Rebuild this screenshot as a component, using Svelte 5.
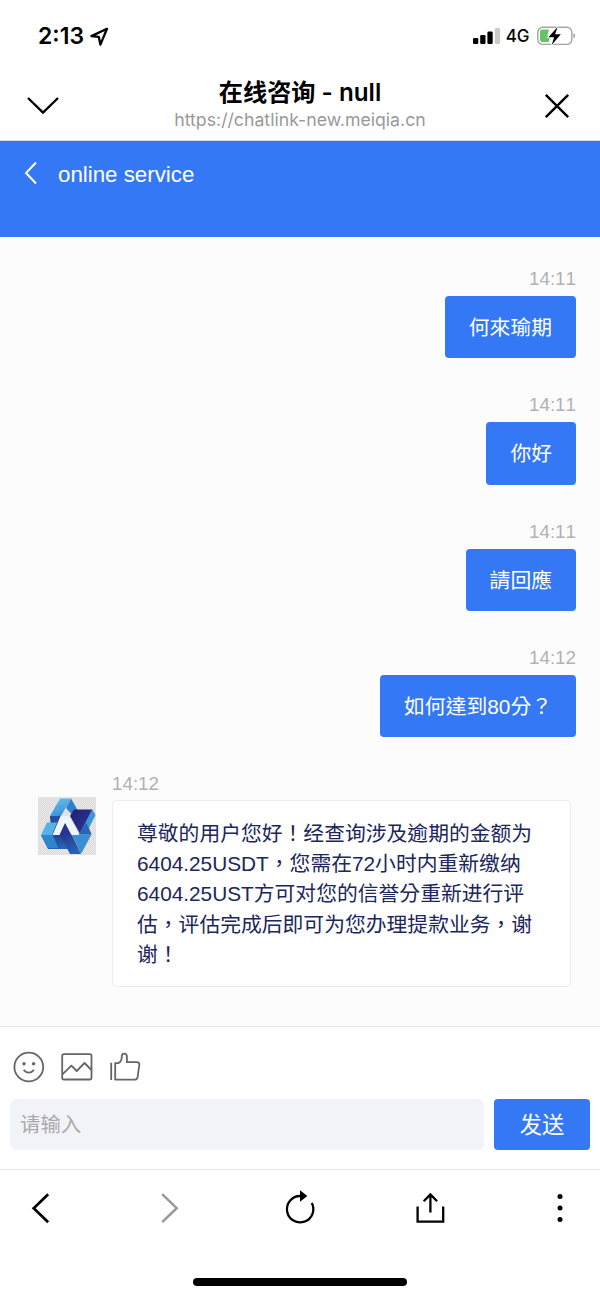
<script lang="ts">
    const messages = [
        { time: '14:11', text: '何來瑜期' },
        { time: '14:11', text: '你好' },
        { time: '14:11', text: '請回應' },
        { time: '14:12', text: '如何達到80分？' }
    ];

    const replyLines = [
        '尊敬的用户您好！经查询涉及逾期的金额为',
        '6404.25USDT，您需在72小时内重新缴纳',
        '6404.25UST方可对您的信誉分重新进行评',
        '估，评估完成后即可为您办理提款业务，谢',
        '谢！'
    ];

    let draft = '';
</script>

<div class="screen">
    <div class="status-bar">
        <div class="clock">
            <span>2:13</span>
            <svg width="20" height="20" viewBox="0 0 20 20">
                <path d="M18 2.8 2.4 10.1 9.8 10.9 11.4 18.6Z" fill="none" stroke="#000" stroke-width="2.3" stroke-linejoin="round" />
            </svg>
        </div>
        <div class="indicators">
            <svg width="28" height="18" viewBox="0 0 28 18">
                <rect x="0" y="11" width="5.3" height="6" rx="1.3" />
                <rect x="7.2" y="8" width="5.3" height="9" rx="1.3" />
                <rect x="14.4" y="4.4" width="5.3" height="12.6" rx="1.3" />
                <rect x="21.8" y="1" width="5.3" height="16" rx="1.3" fill="#ccc" />
            </svg>
            <span class="network">4G</span>
            <svg class="battery" width="40" height="20" viewBox="0 0 40 20">
                <rect x="0.8" y="1.2" width="34" height="17.2" rx="5" fill="none" stroke="#a5a5a5" stroke-width="1.4" />
                <path d="M36.4 7v5.6q1.8-.7 1.8-2.8t-1.8-2.8z" fill="#a5a5a5" />
                <path d="M5.2 3.6H12L10.4 10H13l-1.3 6H5.2q-2.2 0-2.2-2.2v-8q0-2.2 2.2-2.2z" fill="#65c466" />
                <path d="M20.7.7 11.4 11.2h5.7L14.7 19l9.1-10.8h-5.7z" stroke="#fff" stroke-width="1.6" paint-order="stroke" />
            </svg>
        </div>
    </div>

    <header class="browser-bar">
        <button aria-label="Minimize">
            <svg width="34" height="20" viewBox="0 0 34 20">
                <path d="M2 2 17 16.5 32 2" fill="none" stroke="#000" stroke-width="2.4" />
            </svg>
        </button>
        <div class="page-info">
            <h1>在线咨询 - null</h1>
            <p>https://chatlink-new.meiqia.cn</p>
        </div>
        <button aria-label="Close">
            <svg width="26" height="26" viewBox="0 0 26 26">
                <path d="M1.8 1.8 24.2 24.2M24.2 1.8 1.8 24.2" fill="none" stroke="#000" stroke-width="2.4" />
            </svg>
        </button>
    </header>

    <div class="service-bar">
        <svg width="14" height="24" viewBox="0 0 14 24">
            <path d="M12 1.5 2 12 12 22.5" fill="none" stroke="#fff" stroke-width="2" />
        </svg>
        <span>online service</span>
    </div>

    <main class="chat">
        {#each messages as message}
            <div class="message own">
                <time>{message.time}</time>
                <div class="bubble">{message.text}</div>
            </div>
        {/each}

        <div class="message agent">
            <svg class="avatar" width="58" height="58" viewBox="0 0 58 58">
                <defs>
                    <pattern id="checker" width="2" height="2" patternUnits="userSpaceOnUse">
                        <rect width="2" height="2" fill="#eaeaea" />
                        <rect width="1" height="1" fill="#dadada" />
                        <rect x="1" y="1" width="1" height="1" fill="#dadada" />
                    </pattern>
                    <linearGradient id="sky" x2="0.4" y2="1">
                        <stop offset="0" stop-color="#6cc3f0" />
                        <stop offset="1" stop-color="#3a93d8" />
                    </linearGradient>
                    <linearGradient id="navy" x2="1" y2="1">
                        <stop offset="0" stop-color="#201f74" />
                        <stop offset="1" stop-color="#2c3c9c" />
                    </linearGradient>
                    <linearGradient id="royal" x2="0.6" y2="1">
                        <stop offset="0" stop-color="#20388e" />
                        <stop offset="1" stop-color="#2b62b4" />
                    </linearGradient>
                </defs>
                <rect width="58" height="58" fill="url(#checker)" />
                <path d="M12 19H24L41 38H14z" fill="url(#navy)" />
                <path d="M12 19H22L16 34z" fill="#2450a4" />
                <path d="M22 1.5H33L23 19H12z" fill="url(#sky)" />
                <path d="M33 1.5 39.5 13 35 19 28 11z" fill="#2f7fca" />
                <path d="M36 12.5H54.5L42 37 32 19z" fill="url(#navy)" />
                <path d="M54.5 12.5 57.5 18 51 31 53.5 37.5H41z" fill="#3c97d8" />
                <path d="M48 25.5 53.5 37.5H41z" fill="#2a62b4" />
                <path d="M9 25.5H19L14 38H3z" fill="#56b2e6" />
                <path d="M3 38H26L31 52H10z" fill="url(#royal)" />
                <path d="M3 38H15L20 51H10z" fill="#3086cd" />
                <path d="M22 38H34L43 57H32z" fill="url(#royal)" />
                <path d="M34 37.5H53.5L43 57z" fill="#3b8ed4" />
                <path d="M22.5 19H31.5L41 38H33.5L27 26 21.5 38H14.5z" fill="#eef5fc" />
            </svg>
            <div class="reply">
                <time>14:12</time>
                <div class="bubble">
                    {#each replyLines as line}
                        <div>{line}</div>
                    {/each}
                </div>
            </div>
        </div>
    </main>

    <section class="composer">
        <div class="tools">
            <button aria-label="Emoji">
                <svg width="32" height="32" viewBox="0 0 32 32">
                    <circle cx="15.8" cy="16" r="14.4" />
                    <circle class="eye" cx="11" cy="12.7" r="1.7" />
                    <circle class="eye" cx="20.6" cy="12.7" r="1.7" />
                    <path d="M10.6 18.8Q15.8 24.6 21 18.8" />
                </svg>
            </button>
            <button aria-label="Image">
                <svg width="32" height="32" viewBox="0 0 32 32">
                    <rect x="1.2" y="3.2" width="29.3" height="25.3" rx="1.8" />
                    <path d="M1.4 23.3 10.4 14.7 15.7 20 23.5 12 30.5 19" />
                </svg>
            </button>
            <button aria-label="Like">
                <svg width="32" height="32" viewBox="0 0 32 32">
                    <path d="M2.2 11.8V29M6.2 28.6V12.2H9.2Q12.8 10.8 12.8 5.5 12.8 2.7 15.2 2.7 17.9 2.7 17.9 5.8V11.2H28Q30.6 11.2 30.3 14L28.6 26.2Q28.1 28.6 25.7 28.6Z" />
                </svg>
            </button>
        </div>
        <div class="input-row">
            <input type="text" placeholder="请输入" bind:value={draft} />
            <button class="send-btn">发送</button>
        </div>
    </section>

    <nav class="toolbar">
        <button aria-label="Back">
            <svg width="32" height="32" viewBox="0 0 32 32">
                <path d="M24.2 2.2 9.7 16.2 24.2 30.2" fill="none" stroke="#000" stroke-width="2.7" />
            </svg>
        </button>
        <button aria-label="Forward">
            <svg width="32" height="32" viewBox="0 0 32 32">
                <path d="M8.2 2.2 22.7 16.2 8.2 30.2" fill="none" stroke="#999" stroke-width="2.5" />
            </svg>
        </button>
        <button aria-label="Reload">
            <svg width="32" height="36" viewBox="0 0 32 36">
                <path d="M18 6H16A13.2 13.2 0 1 0 27.8 13" fill="none" stroke="#000" stroke-width="2.3" />
                <path d="M16 0.3 23.4 6 16 11.7z" />
            </svg>
        </button>
        <button aria-label="Share">
            <svg width="32" height="32" viewBox="0 0 32 32">
                <path d="M3.6 14.5V29.6H29.2V14.5M16.4 20.5V2.5M9.7 9.2 16.4 2.5 23.1 9.2" fill="none" stroke="#000" stroke-width="2.3" />
            </svg>
        </button>
        <button aria-label="More">
            <svg width="32" height="32" viewBox="0 0 32 32">
                <circle cx="16" cy="4.5" r="2.5" />
                <circle cx="16" cy="16" r="2.5" />
                <circle cx="16" cy="27.5" r="2.5" />
            </svg>
        </button>
    </nav>

    <div class="home-indicator"></div>
</div>

<style>
    :global(body) {
        margin: 0;
        background: #fff;
    }

    .screen {
        display: flex;
        flex-direction: column;
        width: 600px;
        height: 1299px;
        overflow: hidden;
        background: #fff;
        color: #000;
        font-family: "Liberation Sans", "Noto Sans CJK TC", sans-serif;
    }

    button {
        display: flex;
        align-items: center;
        justify-content: center;
        padding: 0;
        border: none;
        background: none;
    }

    svg {
        display: block;
        flex-shrink: 0;
    }

    .status-bar {
        display: flex;
        justify-content: space-between;
        align-items: center;
        box-sizing: border-box;
        height: 72px;
        padding: 0 23.5px 0 38px;
        font-family: Inter, sans-serif;
    }

    .clock {
        display: flex;
        align-items: center;
        gap: 4.5px;
        font-size: 23px;
        font-weight: 600;
    }

    .indicators {
        display: flex;
        align-items: center;
    }

    .network {
        margin-left: 5px;
        font-size: 17px;
        font-weight: 500;
    }

    .battery {
        margin-left: 7px;
    }

    .browser-bar {
        display: flex;
        justify-content: space-between;
        box-sizing: border-box;
        height: 69px;
        padding: 0 30px 0 26px;
        border-bottom: 1px solid #d5d9e0;
    }

    .browser-bar button {
        width: 34px;
        height: 67px;
    }

    .browser-bar button:last-child {
        width: 26px;
    }

    .page-info {
        margin-right: 4px;
        text-align: center;
        font-family: Inter, "Noto Sans CJK SC", sans-serif;
    }

    .page-info h1 {
        margin: 5px 0 0;
        font-size: 24.2px;
        line-height: 32px;
        font-weight: 600;
    }

    .page-info p {
        margin: 0;
        color: #999;
        font-size: 17.7px;
        line-height: 21px;
    }

    .service-bar {
        display: flex;
        align-items: flex-start;
        gap: 20px;
        box-sizing: border-box;
        height: 96px;
        padding: 20px 24px;
        background: #3478f6;
        color: #fff;
        font-size: 22.3px;
        line-height: 28px;
    }

    .chat {
        box-sizing: border-box;
        height: 789px;
        padding: 29px 24px 0;
        background: #fcfcfc;
        font-size: 20.8px;
    }

    time {
        display: block;
        height: 30px;
        color: #b2b2b2;
        font-size: 18.8px;
        line-height: 26px;
        font-kerning: none;
    }

    .own {
        display: flex;
        flex-direction: column;
        align-items: flex-end;
        margin-bottom: 33.9px;
    }

    .own .bubble {
        box-sizing: border-box;
        height: 62.4px;
        padding: 1px 24px 0;
        border-radius: 4px;
        background: #3478f6;
        color: #fff;
        line-height: 62.4px;
    }

    .agent {
        display: flex;
        gap: 16px;
        padding-left: 14px;
    }

    .avatar {
        margin-top: 25.8px;
    }

    .agent time {
        height: 28.4px;
        line-height: 25px;
    }

    .agent .bubble {
        box-sizing: border-box;
        width: 459px;
        height: 187px;
        padding: 18px 24px 16px;
        border: 1.5px solid #ededef;
        border-radius: 5px;
        background: #fff;
        color: #20265b;
        line-height: 30.4px;
        white-space: nowrap;
    }

    .composer {
        box-sizing: border-box;
        height: 143px;
        padding: 24px 10px 0;
        border-top: 1px solid #e6e6e6;
    }

    .tools {
        display: flex;
        gap: 16px;
        padding-left: 3px;
    }

    .tools svg {
        fill: none;
        stroke: #666;
        stroke-width: 1.8;
        stroke-linejoin: round;
    }

    .tools .eye {
        fill: #666;
        stroke: none;
    }

    .input-row {
        display: flex;
        gap: 10px;
        margin-top: 16px;
    }

    input {
        flex: 1;
        box-sizing: border-box;
        height: 51px;
        padding: 0 10px 3px;
        border: none;
        border-radius: 7px;
        background: #f2f3f8;
        font-family: "Noto Sans CJK SC", sans-serif;
        font-size: 20.4px;
    }

    input::placeholder {
        color: #aaa;
    }

    .send-btn {
        width: 96px;
        height: 51px;
        padding-bottom: 3px;
        border-radius: 4px;
        background: #3478f6;
        color: #fff;
        font-family: "Noto Sans CJK SC", sans-serif;
        font-size: 22.3px;
    }

    .toolbar {
        display: flex;
        justify-content: space-between;
        box-sizing: border-box;
        height: 109px;
        padding: 0 24px;
        border-top: 1px solid #e4e4e4;
    }

    .toolbar button {
        height: 75px;
    }

    .home-indicator {
        width: 214px;
        height: 8px;
        margin: 0 auto;
        border-radius: 4px;
        background: #000;
    }
</style>
